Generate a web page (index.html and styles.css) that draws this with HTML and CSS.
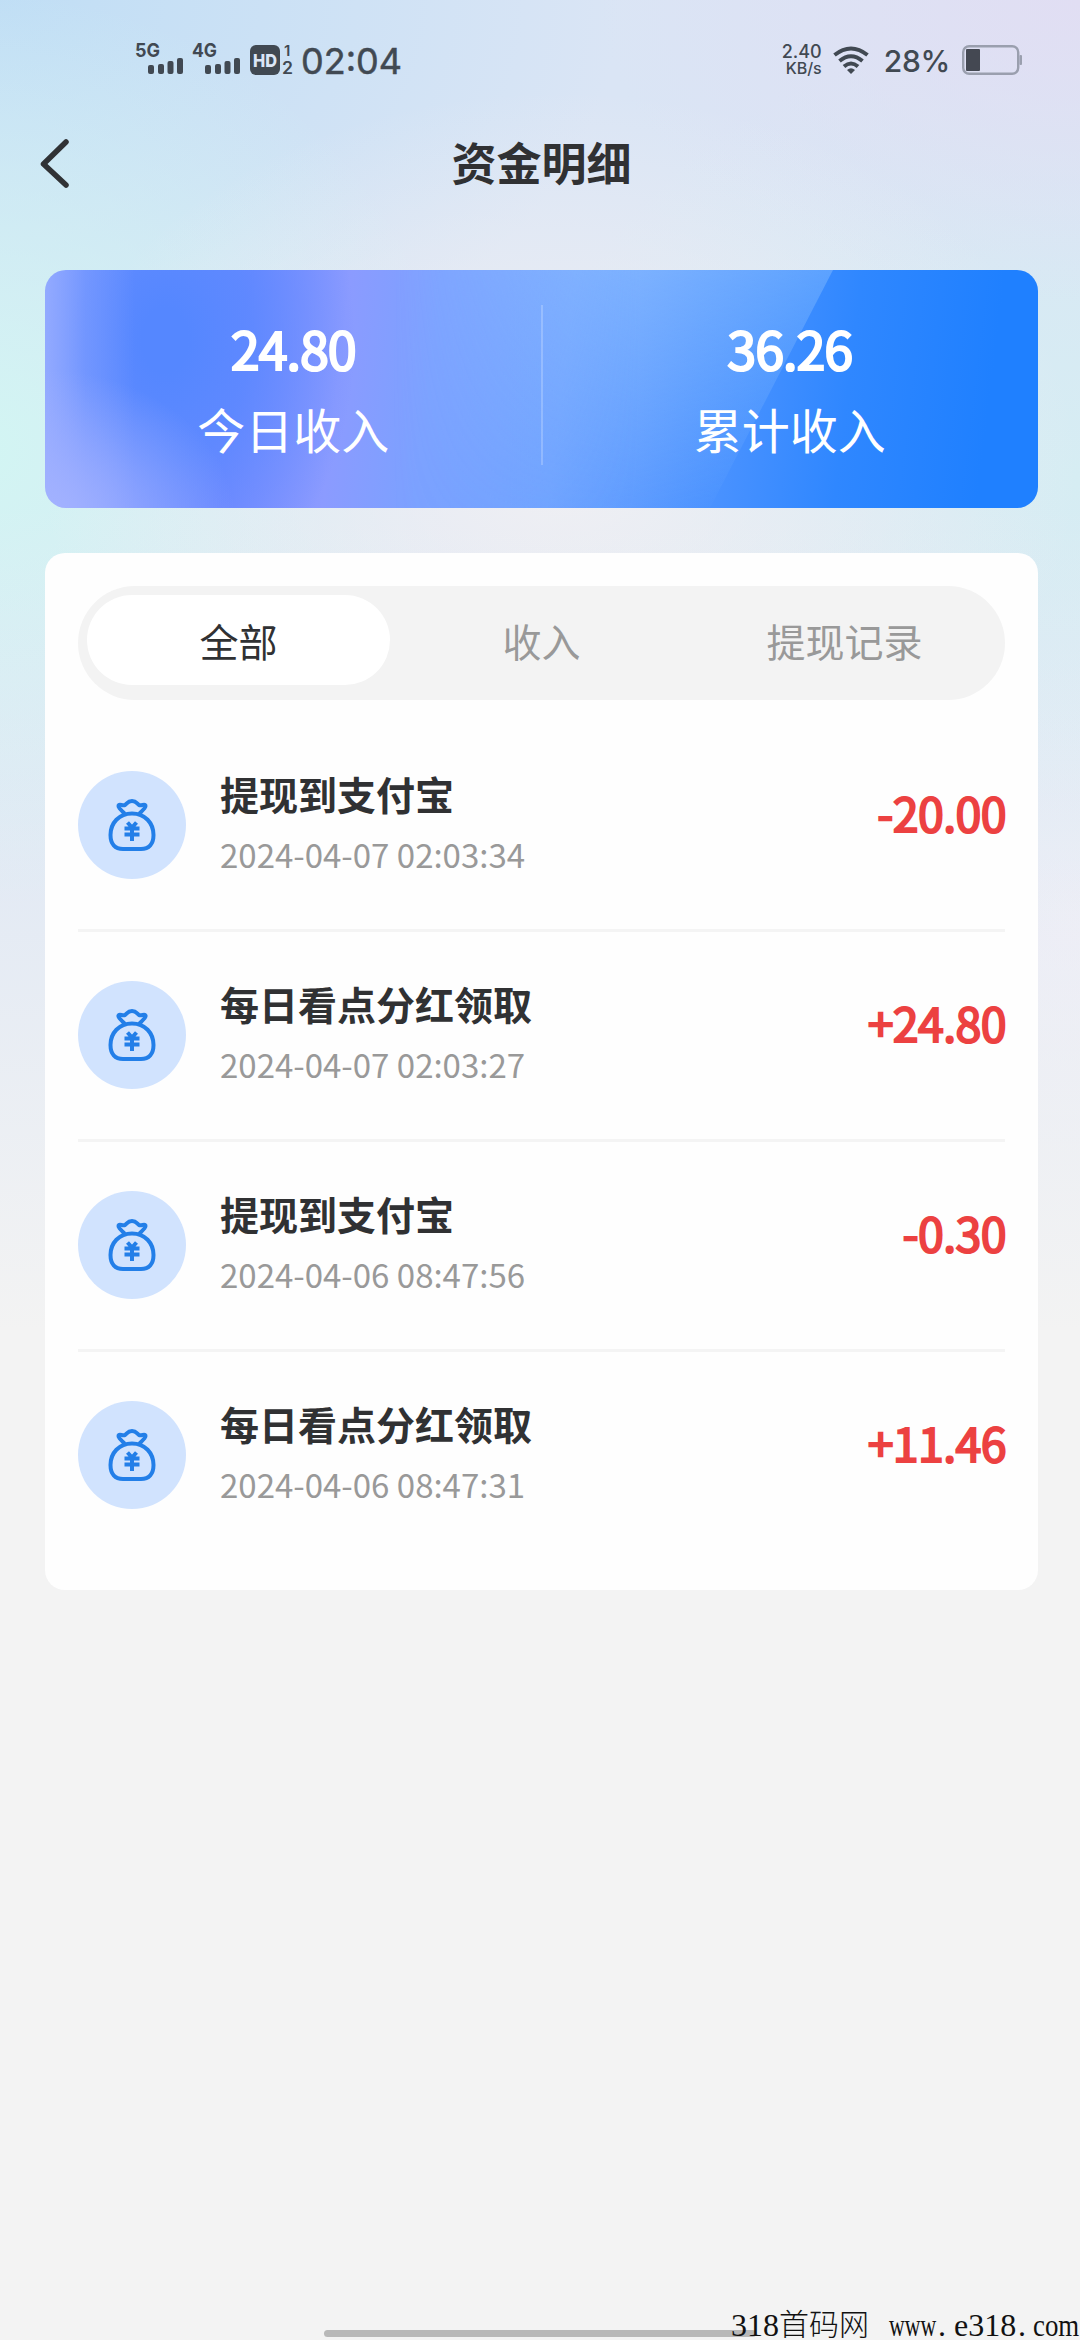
FILE: index.html
```html
<!DOCTYPE html>
<html lang="zh-CN">
<head>
<meta charset="utf-8">
<title>资金明细</title>
<link rel="stylesheet" href="styles.css">
</head>
<body>
<svg class="defs" width="0" height="0" aria-hidden="true">
  <symbol id="bag" viewBox="0 0 48 54">
    <g fill="none" stroke="#237fe8" stroke-width="4" stroke-linecap="round" stroke-linejoin="round">
      <path d="M16 15 C12 11 10 9 10.500 7.500 C11.500 5 14.500 8.500 17 7 C19 5.500 20 3 24 3 C28 3 29 5.500 31 7 C33.500 8.500 36.500 5 37.500 7.500 C38 9 36 11 32 15"/>
      <path d="M24 15.500 C11 15.500 2.500 25 2.500 37 C2.500 46 7 51 15 51 H33 C41 51 45.500 46 45.500 37 C45.500 25 37 15.500 24 15.500 Z"/>
      <path stroke-linecap="butt" d="M19.500 24.500 L24 29.500 L28.500 24.500 M16.500 30.500 H31.500 M16.500 36.500 H31.500 M24 29.500 V43"/>
    </g>
  </symbol>
</svg>
<div class="screen">
  <header class="status">
    <div class="status-left">
      <svg width="270" height="36" viewBox="0 0 270 36" fill="#414952">
        <g font-family="Inter, sans-serif" font-weight="700">
          <text x="-1" y="15" font-size="19" textLength="25" lengthAdjust="spacingAndGlyphs">5G</text>
          <text x="56" y="15" font-size="19" textLength="25" lengthAdjust="spacingAndGlyphs">4G</text>
          <text x="148" y="14" font-size="15" font-weight="600">1</text>
          <text x="146" y="32" font-size="17" font-weight="600" textLength="11" lengthAdjust="spacingAndGlyphs">2</text>
        </g>
        <rect x="12" y="23" width="6" height="9" rx="2"/><rect x="22" y="22" width="6" height="10" rx="2"/><rect x="31.500" y="19" width="6" height="13" rx="2"/><rect x="41" y="16" width="6" height="16" rx="2"/>
        <rect x="69" y="23" width="6" height="9" rx="2"/><rect x="79" y="22" width="6" height="10" rx="2"/><rect x="88.500" y="19" width="6" height="13" rx="2"/><rect x="98" y="16" width="6" height="16" rx="2"/>
        <rect x="114" y="3" width="30" height="30" rx="6"/>
        <text x="117" y="24.500" font-family="Inter, sans-serif" font-weight="800" font-size="18" fill="#dbe6f6" textLength="24" lengthAdjust="spacingAndGlyphs">HD</text>
        <text x="165" y="31.500" font-family="Inter, sans-serif" font-size="36" stroke="#414952" stroke-width=".5" textLength="101" lengthAdjust="spacingAndGlyphs">02:04</text>
      </svg>
    </div>
    <div class="status-right">
      <div class="speed"><span>2.40</span><span>KB/s</span></div>
      <svg class="wifi" width="36" height="28" viewBox="0 0 36 28" fill="none" stroke="#414952" stroke-width="4">
        <path d="M1.500 9 Q18 -4 34.500 9"/><path d="M6.500 15 Q18 5.500 29.500 15"/><path d="M11 20.500 Q18 14.500 25 20.500"/>
        <path d="M14 24 Q18 20.500 22 24 L18 28 Z" fill="#414952" stroke="none"/>
      </svg>
      <span class="percent">28%</span>
      <svg width="60" height="30" viewBox="0 0 60 30"><rect x="1.200" y="1.200" width="55" height="27.600" rx="6" fill="none" stroke="#9a9fae" stroke-width="2.400"/><rect x="4" y="4" width="14" height="22" rx="1" fill="#444852"/><rect x="57.500" y="10" width="2.500" height="10" rx="1" fill="#9a9fae"/></svg>
    </div>
  </header>

  <nav class="titlebar">
    <svg class="back" width="32" height="52" viewBox="0 0 32 52" fill="none" stroke="#303235" stroke-width="5.500" stroke-linecap="round" stroke-linejoin="round"><path d="M27 4 L4.500 26 L27 47"/></svg>
    <h1>资金明细</h1>
  </nav>

  <section class="summary">
    <div class="stat"><strong>24.80</strong><span>今日收入</span></div>
    <div class="stat"><strong>36.26</strong><span>累计收入</span></div>
  </section>

  <main class="card">
    <div class="tabs"><span class="tab active">全部</span><span class="tab">收入</span><span class="tab">提现记录</span></div>
    <ul class="records">
      <li><span class="icon"><svg width="48" height="54"><use href="#bag"/></svg></span><div class="info"><b>提现到支付宝</b><time>2024-04-07 02:03:34</time></div><em>-20.00</em></li>
      <li><span class="icon"><svg width="48" height="54"><use href="#bag"/></svg></span><div class="info"><b>每日看点分红领取</b><time>2024-04-07 02:03:27</time></div><em>+24.80</em></li>
      <li><span class="icon"><svg width="48" height="54"><use href="#bag"/></svg></span><div class="info"><b>提现到支付宝</b><time>2024-04-06 08:47:56</time></div><em>-0.30</em></li>
      <li><span class="icon"><svg width="48" height="54"><use href="#bag"/></svg></span><div class="info"><b>每日看点分红领取</b><time>2024-04-06 08:47:31</time></div><em>+11.46</em></li>
    </ul>
  </main>

  <div class="home-bar"></div>
  <svg class="site-mark" width="351" height="40" viewBox="0 0 351 40" fill="#111" font-family="'Liberation Serif', serif" font-size="32">
    <text x="2" y="36">318</text>
    <text x="50" y="35" font-size="30" font-weight="300" font-family="'Noto Sans CJK SC', sans-serif">首码网</text>
    <text transform="translate(160 36) scale(.68 1)">www</text>
    <text x="209" y="36">.</text>
    <text x="225" y="36">e318</text>
    <text x="289" y="36">.</text>
    <text transform="translate(304 36) scale(.84 1)">com</text>
  </svg>
</div>
</body>
</html>
```
FILE: styles.css
```css
* { box-sizing: border-box; }
body { margin: 0; font-family: "Noto Sans CJK SC", sans-serif; color: #303133; }
.defs { position: absolute; }
.screen {
  position: relative;
  width: 1080px;
  height: 2340px;
  overflow: hidden;
  display: flex;
  flex-direction: column;
  padding: 0 42px 0 45px;
  background:
    linear-gradient(180deg, rgba(243,243,243,0) 500px, rgba(243,243,243,.25) 800px, #f3f3f3 1330px),
    radial-gradient(ellipse 520px 380px at 560px 470px, rgba(241,240,243,.95), rgba(236,238,244,0)),
    radial-gradient(ellipse 480px 460px at -20px 450px, #d2f5f3, rgba(210,245,243,0)),
    radial-gradient(ellipse 620px 420px at 0 0, #c0def5, rgba(192,222,245,0)),
    radial-gradient(ellipse 480px 300px at 1080px 0, #e1def3, rgba(225,222,243,0)),
    radial-gradient(ellipse 560px 460px at 1080px 480px, #d6edf3, rgba(214,236,243,0)),
    radial-gradient(ellipse 400px 400px at 1080px 920px, #e9eaf8, rgba(233,234,248,0)),
    #dae5f5;
}
.status { display: flex; justify-content: space-between; height: 110px; padding: 42px 16px 0 91px; color: #414952; font-family: Inter, sans-serif; }
.status-left svg { display: block; overflow: visible; }
.status-right { display: flex; align-items: center; height: 36px; }
.speed { display: flex; flex-direction: column; align-items: flex-end; font-size: 16px; line-height: 17px; font-weight: 500; }
.speed span:first-child { font-size: 18px; }
.wifi { margin: 0 15px 0 11px; }
.percent { font-size: 30px; line-height: 36px; font-weight: 500; margin-right: 12px; letter-spacing: -.3px; padding-top: 2px; }
.titlebar { display: flex; align-items: center; justify-content: center; height: 106px; margin: 0 0 54px; position: relative; }
.back { position: absolute; left: -6px; top: 28px; }
h1 { margin: 0 0 3px; font-size: 45px; font-weight: 700; line-height: 104px; }
.summary {
  position: relative;
  display: grid;
  grid-template-columns: 1fr 1fr;
  flex: none;
  height: 238px;
  border-radius: 21px;
  overflow: hidden;
  color: #fff;
  background:
    radial-gradient(ellipse 190px 150px at 0 250px, rgba(163,178,255,.95) 10%, rgba(160,176,255,0)),
    linear-gradient(90deg, rgba(150,172,255,.9), rgba(140,166,255,.4) 40px, rgba(130,160,255,0) 90px),
    radial-gradient(ellipse 190px 270px at 120px 70px, #5587ff 12%, rgba(85,135,255,.75) 45%, rgba(100,140,255,0)),
    linear-gradient(97deg, #8b9fff 0, #7b8cff 20%, #8b9bff 30%, #7ba1ff 39%, #6ea2ff 52%, #4a92ff 68%, #2f87ff 80%, #1f80ff 94%);
}
.summary::before { content: ""; position: absolute; inset: 0; background: linear-gradient(168deg, rgba(165,208,255,.6), rgba(110,165,255,0) 88%); clip-path: polygon(300px 0, 788px 0, 665px 238px, 300px 238px); -webkit-mask-image: linear-gradient(90deg, transparent 35%, #000 60%); mask-image: linear-gradient(90deg, transparent 35%, #000 60%); }
.summary::after { content: ""; position: absolute; left: 496px; top: 35px; width: 2px; height: 160px; background: rgba(255,255,255,.22); }
.stat { position: relative; display: flex; flex-direction: column; align-items: center; padding-top: 38px; }
.stat strong { font-size: 52px; line-height: 80px; font-weight: 400; letter-spacing: -1px; -webkit-text-stroke: 2.2px #fff; }
.stat span { font-size: 48px; line-height: 80px; }
.card { flex: none; height: 1037px; margin-top: 45px; padding: 33px; border-radius: 20px; background: #fefefe; }
.tabs { display: grid; grid-template-columns: repeat(3, 303px); height: 114px; padding: 9px; border-radius: 57px; background: #f3f3f3; }
.tab { height: 90px; border-radius: 45px; text-align: center; font-size: 39px; line-height: 90px; color: #999; }
.active { background: #fff; color: #303133; }
.records { list-style: none; margin: 22px 0 0; padding: 0; }
.records li { display: flex; align-items: flex-start; height: 210px; padding-top: 49px; border-bottom: 3px solid #f4f4f4; }
.records li:last-child { border: 0; }
.icon { display: flex; align-items: center; justify-content: center; width: 108px; height: 108px; border-radius: 50%; background: #d1e3fe; }
.info { display: flex; flex-direction: column; flex: 1; margin: -3px 0 0 34px; }
.info b { font-size: 39px; line-height: 50px; font-weight: 700; }
.info time { font-size: 33px; line-height: 50px; margin-top: 11px; color: #999; }
.records em { font-style: normal; font-size: 46.5px; line-height: 80px; font-weight: 400; color: #ec4141; letter-spacing: -.6px; -webkit-text-stroke: 2px #ec4141; margin: 1px -1px 0 0; }
.home-bar { position: absolute; left: 324px; top: 2330px; width: 432px; height: 7px; border-radius: 4px; background: #b8b8b8; }
.site-mark { position: absolute; left: 729px; top: 2300px; }
```
